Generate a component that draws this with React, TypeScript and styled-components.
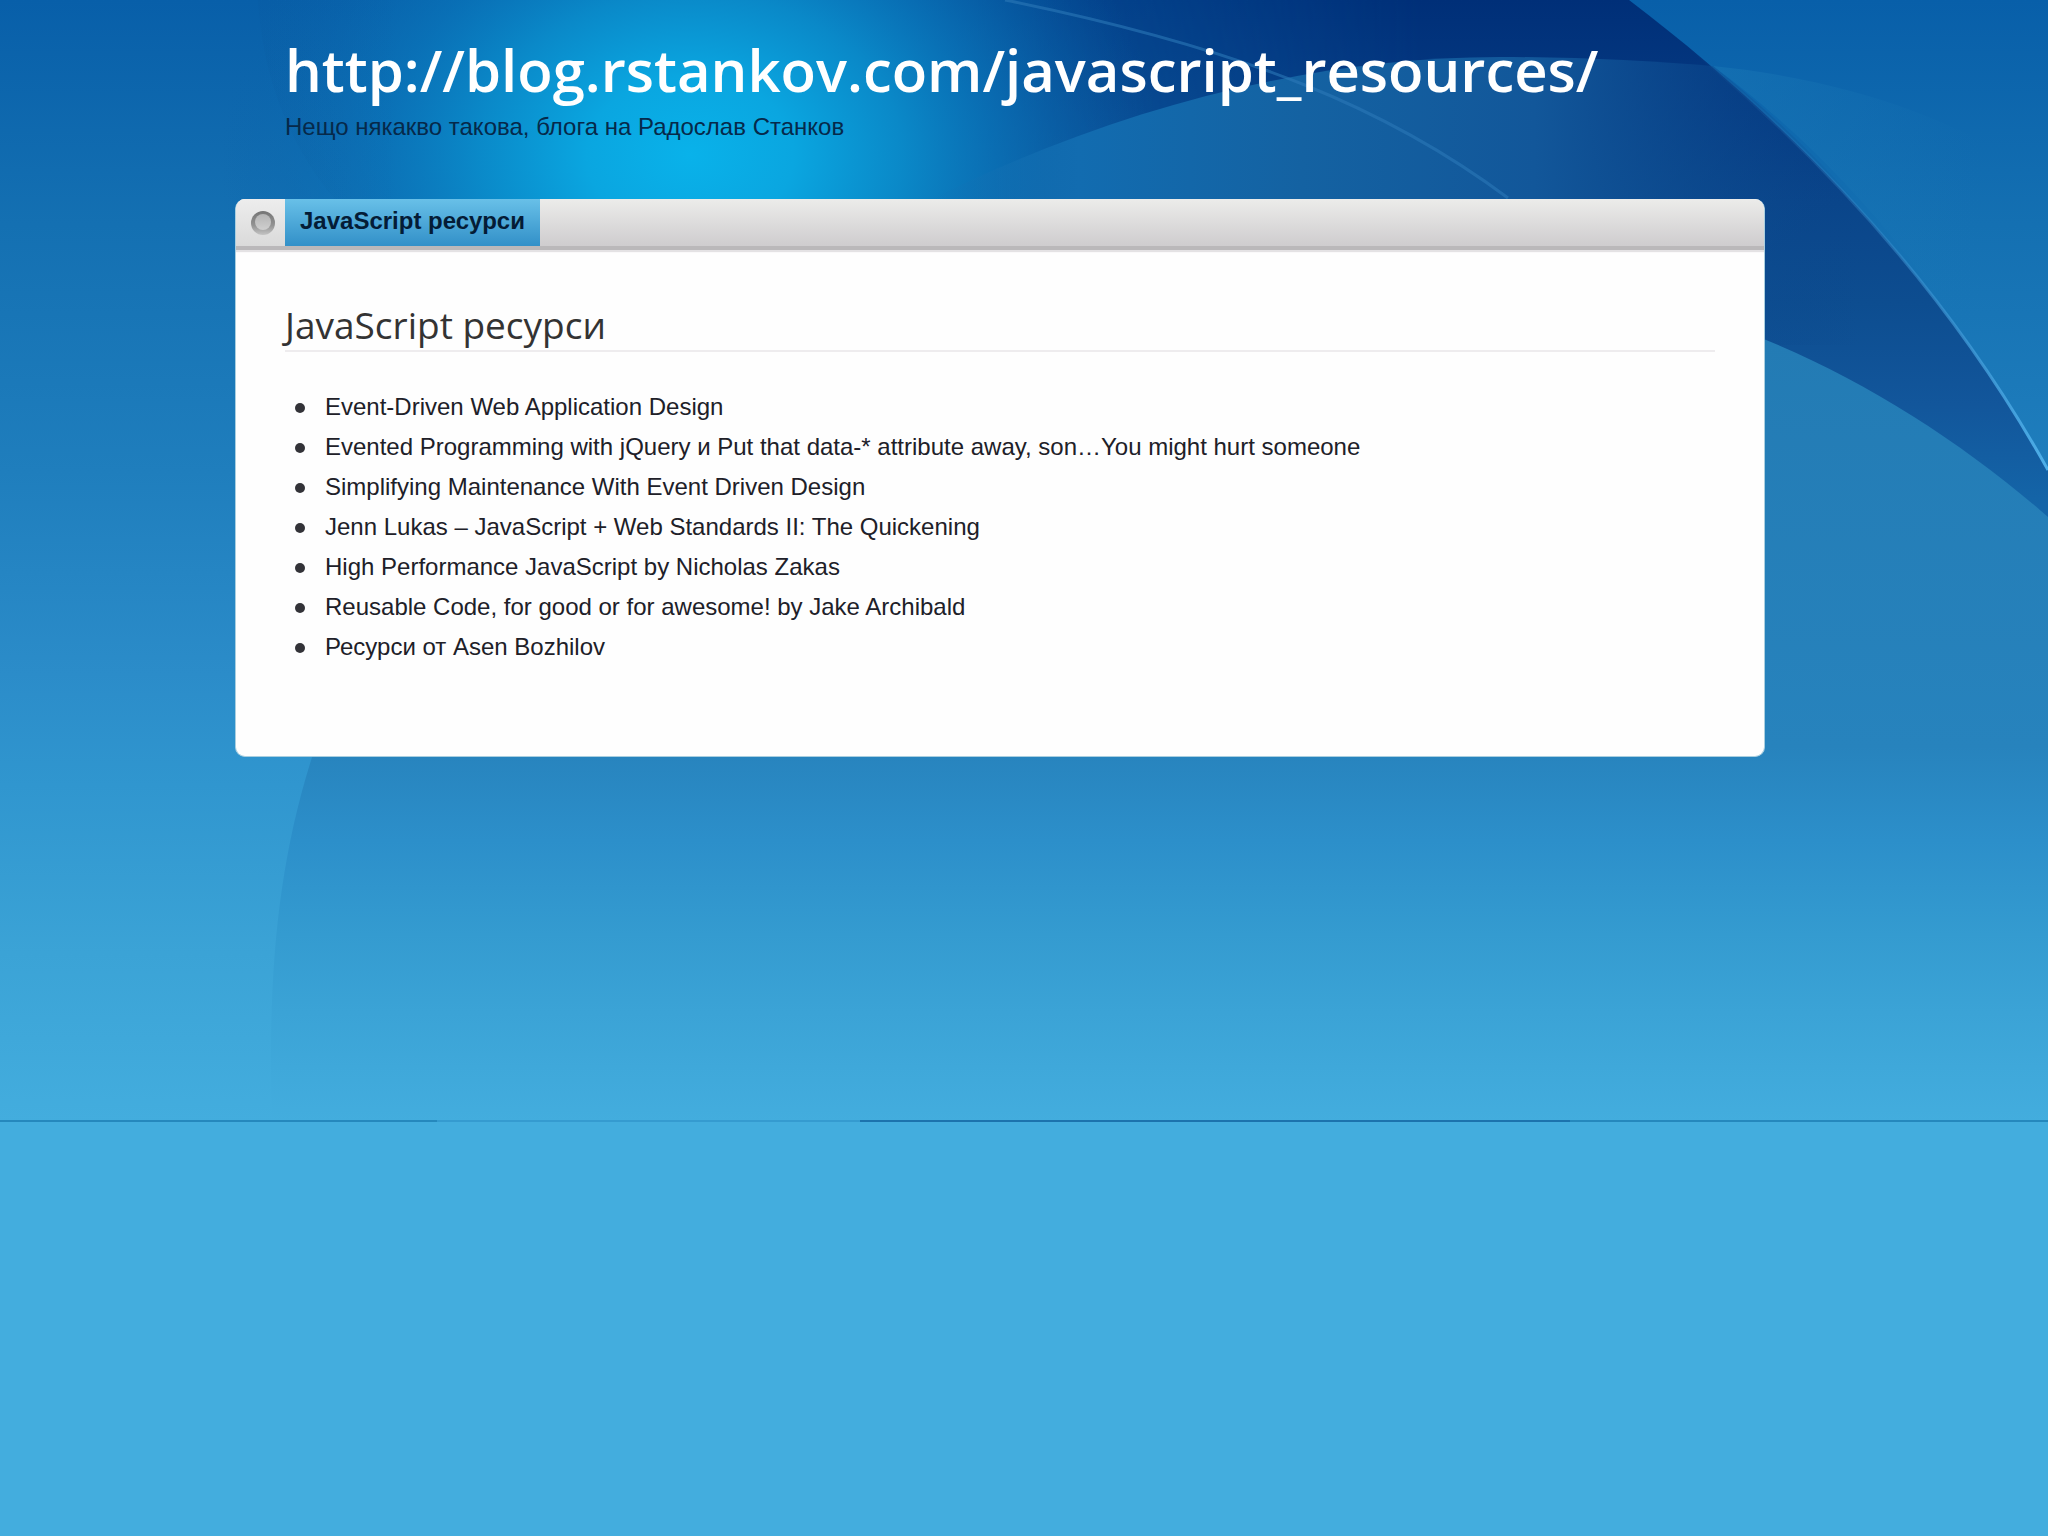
import React from "react";
import styled, { createGlobalStyle } from "styled-components";

const GlobalStyle = createGlobalStyle`
  * { box-sizing: border-box; }
  body {
    margin: 0;
    background: #43adde;
    font-family: "Liberation Sans", Arial, sans-serif;
  }
`;

const Page = styled.div`
  position: relative;
  isolation: isolate;
  min-height: 100vh;
  padding: 28px 283px 64px 235px;
`;

const Backdrop = styled.svg`
  position: absolute;
  z-index: -1;
  top: 0;
  left: 0;
  width: 100%;
  height: 1122px;
  display: block;
`;

const Header = styled.header`
  padding: 0 50px;
  margin-bottom: 57px;
`;

const SiteTitle = styled.h1`
  margin: 0;
  font-family: "Open Sans", "Noto Sans", sans-serif;
  font-size: 58px;
  line-height: 83px;
  font-weight: 600;
  white-space: nowrap;
`;

const TitleLink = styled.a`
  color: #fff;
  text-decoration: none;
`;

const Tagline = styled.p`
  margin: 0;
  font-size: 24px;
  line-height: 31px;
  color: #06294a;
`;

const Card = styled.div`
  overflow: hidden;
  border-radius: 10px;
  background: #fefefe;
  border: 1px solid #a9cfe0;
  border-top: 0;
`;

const TabBar = styled.nav`
  display: flex;
  align-items: stretch;
  height: 51px;
  background: linear-gradient(#ececea, #cfcdcf 46px);
  border-bottom: 4px solid #bab8ba;
  box-shadow: 0 2px 1px #e4e2e4;
`;

const HomeButton = styled.button`
  display: flex;
  align-items: center;
  justify-content: center;
  width: 49px;
  padding: 0 0 0 4px;
  border: 0;
  background: linear-gradient(#ededed, #dadada);
`;

const TabLink = styled.a`
  padding: 0 15px;
  background: linear-gradient(#68c0e8, #3290c8);
  color: #041c36;
  font-size: 24px;
  line-height: 44px;
  font-weight: 700;
  text-decoration: none;
`;

const Article = styled.main`
  padding: 52px 49px 89px;
`;

const ArticleTitle = styled.h2`
  margin: 0 0 35px;
  padding-bottom: 2px;
  border-bottom: 2px solid #eeecee;
  font-family: "Open Sans", "Noto Sans", sans-serif;
  font-size: 37px;
  line-height: 46px;
  font-weight: 400;
  color: #333;
`;

const ResourceList = styled.ul`
  margin: 0;
  padding: 0 0 0 10px;
  list-style: none;
`;

const Resource = styled.li`
  display: flex;
  align-items: center;
  font-size: 24px;
  line-height: 40px;
  color: #202028;

  &::before {
    content: "";
    width: 10px;
    height: 10px;
    margin: 2px 20px 0 0;
    border-radius: 50%;
    background: #333338;
  }
`;

const ResourceText = styled.span`
  white-space: pre-wrap;
`;

const ResourceLink = styled.a`
  color: inherit;
  text-decoration: none;
`;

const resources: string[][] = [
  ["Event-Driven Web Application Design"],
  ["Evented Programming with jQuery", "Put that data-* attribute away, son…You might hurt someone"],
  ["Simplifying Maintenance With Event Driven Design"],
  ["Jenn Lukas – JavaScript + Web Standards II: The Quickening"],
  ["High Performance JavaScript by Nicholas Zakas"],
  ["Reusable Code, for good or for awesome! by Jake Archibald"],
  ["Ресурси от Asen Bozhilov"],
];

function Scenery() {
  return (
    <Backdrop viewBox="0 0 2048 1122" preserveAspectRatio="none" aria-hidden="true">
      <defs>
        <linearGradient id="sky" x1="0" y1="0" x2="0" y2="1">
          <stop offset="0" stopColor="#085fa9" />
          <stop offset="0.2" stopColor="#1470b2" />
          <stop offset="0.42" stopColor="#1f7ebd" />
          <stop offset="0.6" stopColor="#2b8cc9" />
          <stop offset="0.7" stopColor="#3096cf" />
          <stop offset="0.85" stopColor="#3ba3d6" />
          <stop offset="1" stopColor="#43adde" />
        </linearGradient>
        <linearGradient id="deep" gradientUnits="userSpaceOnUse" x1="0" y1="0" x2="0" y2="1122">
          <stop offset="0" stopColor="#002f78" />
          <stop offset="0.1" stopColor="#053a82" />
          <stop offset="0.18" stopColor="#0a458a" />
          <stop offset="0.27" stopColor="#0d4d90" />
          <stop offset="0.36" stopColor="#12569b" />
          <stop offset="0.45" stopColor="#1465a8" />
        </linearGradient>
        <linearGradient id="deepReveal" gradientUnits="userSpaceOnUse" x1="800" y1="0" x2="1420" y2="0">
          <stop offset="0" stopColor="#000" />
          <stop offset="0.4" stopColor="#888" />
          <stop offset="1" stopColor="#fff" />
        </linearGradient>
        <mask id="deepMask" maskUnits="userSpaceOnUse" x="0" y="0" width="2048" height="1122">
          <rect width="2048" height="1122" fill="url(#deepReveal)" />
        </mask>
        <linearGradient id="lower" gradientUnits="userSpaceOnUse" x1="0" y1="340" x2="0" y2="1122">
          <stop offset="0" stopColor="#237bb4" />
          <stop offset="0.52" stopColor="#2783bd" />
          <stop offset="0.64" stopColor="#2c8fca" />
          <stop offset="0.76" stopColor="#349bd0" />
          <stop offset="0.86" stopColor="#3ba3d6" />
          <stop offset="1" stopColor="#43adde" />
        </linearGradient>
        <linearGradient id="dome" gradientUnits="userSpaceOnUse" x1="930" y1="0" x2="1860" y2="0">
          <stop offset="0" stopColor="#1273b5" stopOpacity="0" />
          <stop offset="0.16" stopColor="#126cb0" />
          <stop offset="0.4" stopColor="#1462a2" />
          <stop offset="0.65" stopColor="#12579a" />
          <stop offset="1" stopColor="#0a458a" stopOpacity="0" />
        </linearGradient>
        <linearGradient id="haze" gradientUnits="userSpaceOnUse" x1="1713" y1="0" x2="1980" y2="0">
          <stop offset="0" stopColor="#1a78b6" stopOpacity="0.5" />
          <stop offset="1" stopColor="#1a78b6" stopOpacity="0" />
        </linearGradient>
        <linearGradient id="leftShade" gradientUnits="userSpaceOnUse" x1="262" y1="0" x2="400" y2="0">
          <stop offset="0" stopColor="#085294" stopOpacity="0.1" />
          <stop offset="1" stopColor="#085294" stopOpacity="0" />
        </linearGradient>
        <radialGradient id="glow" gradientUnits="userSpaceOnUse" cx="0" cy="0" r="1" gradientTransform="translate(690 155) scale(470 360)">
          <stop offset="0" stopColor="#09b2ea" />
          <stop offset="0.22" stopColor="#0aa6e0" />
          <stop offset="0.45" stopColor="#0a8bca" stopOpacity="0.95" />
          <stop offset="0.65" stopColor="#0976bb" stopOpacity="0.7" />
          <stop offset="1" stopColor="#0a62aa" stopOpacity="0" />
        </radialGradient>
        <linearGradient id="rim" gradientUnits="userSpaceOnUse" x1="0" y1="0" x2="0" y2="471">
          <stop offset="0.1" stopColor="#2a78ba" stopOpacity="0" />
          <stop offset="1" stopColor="#4fb0ea" />
        </linearGradient>
      </defs>
      <rect width="2048" height="1122" fill="url(#sky)" />
      <path d="M1713 66 C1850 80 1960 120 2048 180 V471 C1945 285 1840 160 1713 66 Z" fill="url(#haze)" />
      <path d="M600 0 H1629 C1800 130 1945 285 2048 470 V530 H600 Z" fill="url(#deep)" mask="url(#deepMask)" />
      <rect x="200" width="970" height="515" fill="url(#glow)" />
      <path d="M930 200 C1100 115 1300 57 1500 57 C1580 57 1650 61 1713 66 C1765 107 1815 155 1860 206 V345 H930 Z" fill="url(#dome)" />
      <path d="M258 0 H450 V200 H335 C285 140 262 70 258 0 Z" fill="url(#leftShade)" />
      <path d="M1005 0 C1250 50 1390 110 1508 198" fill="none" stroke="#2b78b8" strokeWidth="3" opacity="0.6" />
      <path d="M1629 0 C1800 130 1945 285 2048 470" fill="none" stroke="url(#rim)" strokeWidth="3" />
      <path d="M1740 330 C1850 370 1960 440 2048 517 V1122 H272 C268 990 274 870 316 745 Z" fill="url(#lower)" />
      <rect y="1120" width="2048" height="2" fill="#2588bd" />
      <rect x="437" y="1120" width="423" height="2" fill="#359bd0" />
      <rect x="860" y="1120" width="710" height="2" fill="#1c73ad" />
    </Backdrop>
  );
}

function HomeIcon() {
  return (
    <svg width="26" height="26" viewBox="0 0 26 26" aria-hidden="true">
      <defs>
        <linearGradient id="ring" x1="0" y1="0" x2="0" y2="1">
          <stop offset="0" stopColor="#747474" />
          <stop offset="0.6" stopColor="#939393" />
          <stop offset="1" stopColor="#c4c4c4" />
        </linearGradient>
        <linearGradient id="core" x1="0" y1="0" x2="0" y2="1">
          <stop offset="0" stopColor="#b4b4b4" />
          <stop offset="1" stopColor="#cfcfcf" />
        </linearGradient>
      </defs>
      <circle cx="13" cy="13" r="12" fill="url(#ring)" />
      <ellipse cx="13" cy="12" rx="8" ry="8" fill="url(#core)" />
    </svg>
  );
}

export default function App() {
  return (
    <>
      <GlobalStyle />
      <Page>
        <Scenery />
        <Header>
          <SiteTitle>
            <TitleLink href="#">http://blog.rstankov.com/javascript_resources/</TitleLink>
          </SiteTitle>
          <Tagline>Нещо някакво такова, блога на Радослав Станков</Tagline>
        </Header>
        <Card>
          <TabBar>
            <HomeButton type="button" aria-label="Начало">
              <HomeIcon />
            </HomeButton>
            <TabLink href="#">JavaScript ресурси</TabLink>
          </TabBar>
          <Article>
            <ArticleTitle>JavaScript ресурси</ArticleTitle>
            <ResourceList>
              {resources.map((links) => (
                <Resource key={links[0]}>
                  <ResourceText>
                    {links.map((label, index) => (
                      <React.Fragment key={label}>
                        {index > 0 && " и "}
                        <ResourceLink href="#">{label}</ResourceLink>
                      </React.Fragment>
                    ))}
                  </ResourceText>
                </Resource>
              ))}
            </ResourceList>
          </Article>
        </Card>
      </Page>
    </>
  );
}
